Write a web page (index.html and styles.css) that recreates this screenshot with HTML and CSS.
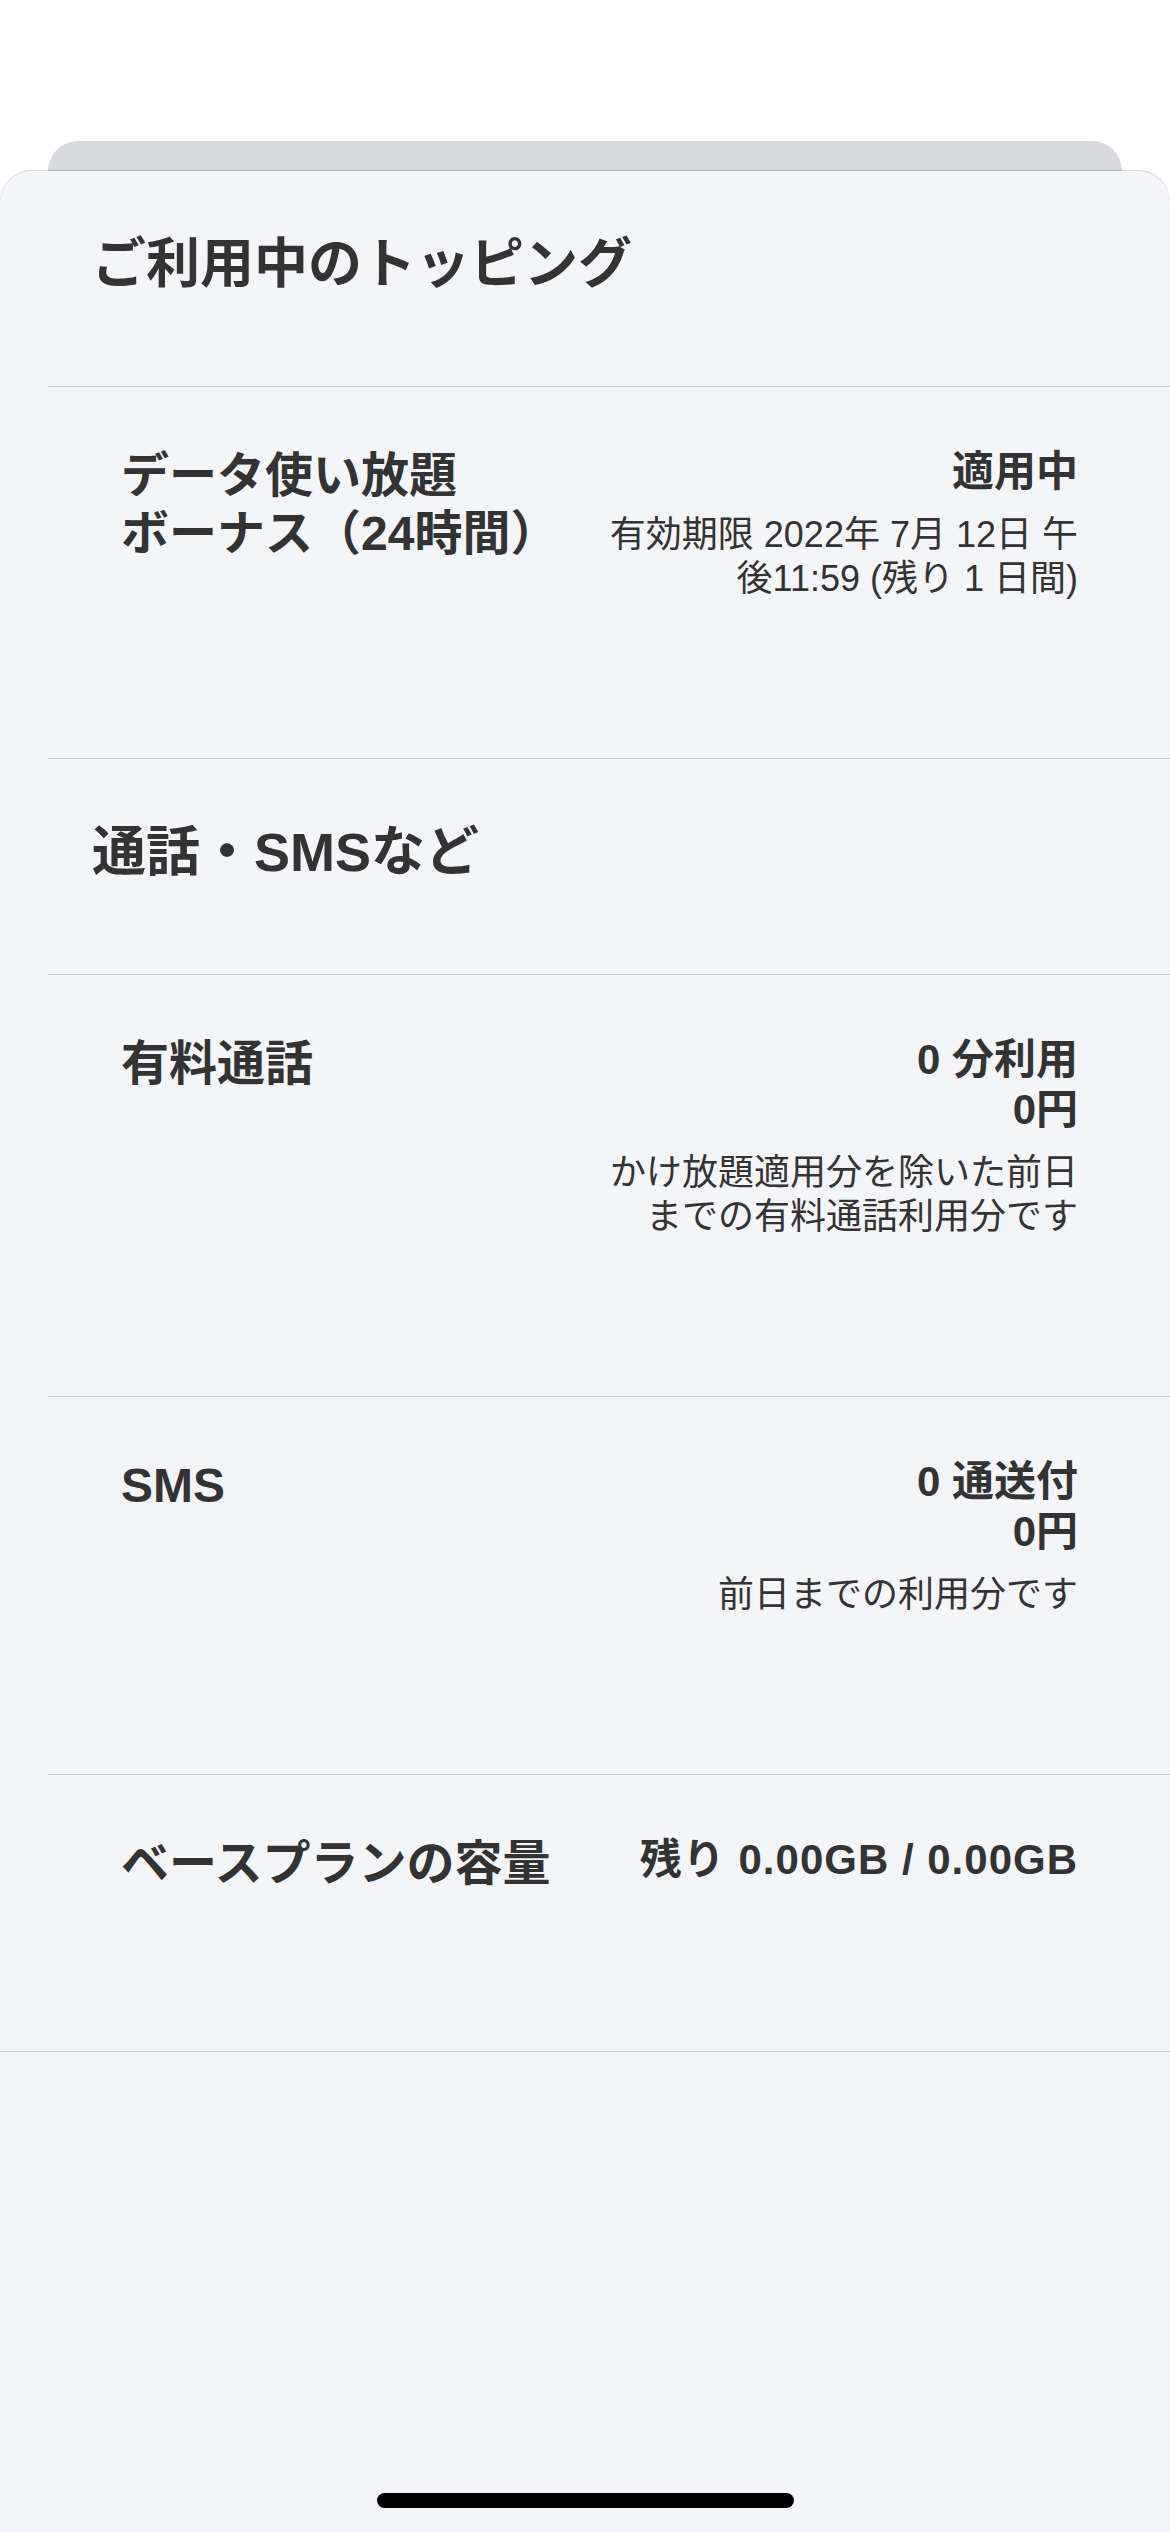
FILE: index.html
```html
<!DOCTYPE html>
<html lang="ja">
<head>
<meta charset="utf-8">
<title>ご利用中のトッピング</title>
<link rel="stylesheet" href="styles.css">
</head>
<body>
<div class="screen">
  <div class="back-card"></div>
  <main class="sheet">
    <div class="list">
      <section class="group">
        <h2 class="group-title">ご利用中のトッピング</h2>
        <div class="row">
          <div class="row-label">データ使い放題<br>ボーナス（24時間）</div>
          <div class="row-value">
            <div class="value-main">適用中</div>
            <div class="value-note">有効期限 2022年 7月 12日 午後11:59 (残り 1 日間)</div>
          </div>
        </div>
      </section>
      <section class="group">
        <h2 class="group-title">通話・SMSなど</h2>
        <div class="row">
          <div class="row-label">有料通話</div>
          <div class="row-value">
            <div class="value-main">0 分利用<br>0円</div>
            <div class="value-note">かけ放題適用分を除いた前日までの有料通話利用分です</div>
          </div>
        </div>
        <div class="row">
          <div class="row-label">SMS</div>
          <div class="row-value">
            <div class="value-main">0 通送付<br>0円</div>
            <div class="value-note">前日までの利用分です</div>
          </div>
        </div>
        <div class="row row-last">
          <div class="row-label">ベースプランの容量</div>
          <div class="row-value">
            <div class="value-main value-latin">残り 0.00GB / 0.00GB</div>
          </div>
        </div>
      </section>
    </div>
    <div class="home-indicator"></div>
  </main>
</div>
</body>
</html>
```
FILE: styles.css
```css
* { box-sizing: border-box; }

html, body {
  margin: 0;
  padding: 0;
  background: #ffffff;
}

body {
  font-family: "Liberation Sans", "Noto Sans CJK JP", sans-serif;
  color: #333333;
}

.screen {
  width: 1170px;
  height: 2532px;
  padding-top: 141px;
  display: flex;
  flex-direction: column;
  overflow: hidden;
}

.back-card {
  height: 30px;
  margin: 0 48px;
  background: #d8d9dd;
  border-radius: 30px 30px 0 0;
  flex: 0 0 auto;
}

.sheet {
  flex: 1 1 auto;
  background: #f4f5f9;
  border-radius: 32px 32px 0 0;
  box-shadow: 0 -1px 1px rgba(0, 0, 0, 0.18);
  display: flex;
  flex-direction: column;
  position: relative;
}

.list {
  border-bottom: 1px solid #c9c9cd;
}

.group {
  margin-left: 48px;
}

.group-title {
  margin: 0;
  padding: 61px 0 90px 44px;
  font-size: 54px;
  line-height: 64px;
  font-weight: 700;
  border-bottom: 1px solid #c9c9cd;
}

.row {
  display: flex;
  justify-content: space-between;
  align-items: flex-start;
  padding: 60px 92px 157px 73px;
  border-bottom: 1px solid #c9c9cd;
}

.row-last {
  border-bottom: none;
  padding-bottom: 158px;
}

.row-label {
  flex: 0 0 auto;
  font-size: 48px;
  line-height: 58px;
  font-weight: 700;
}

.row-value {
  flex: 0 0 480px;
  width: 480px;
  text-align: right;
}

.value-main {
  font-size: 42px;
  line-height: 50px;
  font-weight: 700;
}

.value-latin {
  letter-spacing: 1px;
}

.value-note {
  margin-top: 16px;
  font-size: 36px;
  line-height: 44px;
  font-weight: 400;
}

.home-indicator {
  margin: auto auto 24px;
  width: 417px;
  height: 15px;
  border-radius: 8px;
  background: #000000;
}
```
